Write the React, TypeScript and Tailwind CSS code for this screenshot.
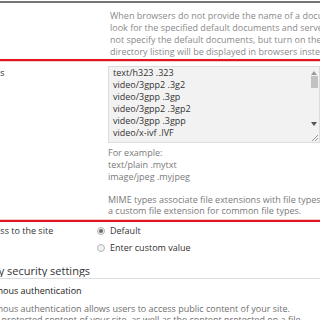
const MIME_ITEMS = [
  'text/h323 .323',
  'video/3gpp2 .3g2',
  'video/3gpp .3gp',
  'video/3gpp2 .3gp2',
  'video/3gpp .3gpp',
  'video/x-ivf .IVF',
];

function RedRule({ pinkAbove }: { pinkAbove?: boolean }) {
  return (
    <div className="flex flex-col">
      {pinkAbove && <div className="h-px bg-[#f6c9cc]" />}
      <div className="h-[2px] bg-[#e3131f]" />
      {!pinkAbove && <div className="h-px bg-[#f6c9cc]" />}
    </div>
  );
}

function Radio({ checked, label }: { checked?: boolean; label: string }) {
  return (
    <div className="flex items-center h-[17px]">
      <span className="w-[8px] h-[8px] rounded-full border border-[#b5b5b5] bg-[#f0f0f0] flex items-center justify-center mr-[5px]">
        {checked && <span className="w-[4px] h-[4px] rounded-full bg-[#6b6b6b]" />}
      </span>
      <span className="text-[#333]">{label}</span>
    </div>
  );
}

export default function App() {
  return (
    <div
      className="w-[320px] h-[320px] overflow-hidden bg-white text-[9px] leading-[12px] whitespace-nowrap"
      style={{ fontFamily: '"Open Sans", "Liberation Sans", sans-serif' }}
    >
      <div className="mt-px h-[2px] bg-[#757575]" />

      {/* Default document description */}
      <div className="flex pt-[7px] pb-[1px]">
        <div className="w-[110px] shrink-0" />
        <div className="text-[#8a8a8a] overflow-hidden">
          <p>When browsers do not provide the name of a document, IIS can</p>
          <p>look for the specified default documents and serve the first one</p>
          <p>not specify the default documents, but turn on the Directory browsing</p>
          <p>directory listing will be displayed in browsers instead of a page.</p>
        </div>
      </div>

      <RedRule />

      {/* MIME types */}
      <div className="flex pt-[4px] pb-[3px]">
        <div className="w-[108px] shrink-0 overflow-hidden">
          <div className="-ml-[44px] pt-[1px] text-[#333]">MIME types</div>
        </div>
        <div className="flex-1 min-w-0">
          <div className="relative h-[77px] border border-[#dcdcdc] bg-[#f2f2f2] flex">
            <div className="flex-1 pl-[4px] text-[#333]">
              {MIME_ITEMS.map((m) => (
                <div key={m}>{m}</div>
              ))}
            </div>
            <div className="w-[10px] flex flex-col items-center pt-[4px]">
              <svg width="6" height="4" viewBox="0 0 6 4">
                <path d="M0 4 L3 0 L6 4 Z" fill="#9a9a9a" />
              </svg>
              <div className="mt-[1px] w-[7px] h-[12px] bg-[#c2c2c2]" />
              <div className="flex-1" />
              <svg width="6" height="4" viewBox="0 0 6 4" className="mb-[16px]">
                <path d="M0 0 L6 0 L3 4 Z" fill="#555" />
              </svg>
            </div>
            <svg width="7" height="7" viewBox="0 0 7 7" className="absolute right-[1px] bottom-[1px]">
              <path d="M1 7 L7 1 M4 7 L7 4" stroke="#9a9a9a" strokeWidth="1" />
            </svg>
          </div>
          <div className="pt-[4px] text-[#7a7a7a]">
            <p>For example:</p>
            <p>text/plain .mytxt</p>
            <p>image/jpeg .myjpeg</p>
            <p className="mt-[11px] leading-[11px]">MIME types associate file extensions with file types. To add</p>
            <p className="leading-[11px]">a custom file extension for common file types.</p>
          </div>
        </div>
      </div>

      <RedRule pinkAbove />

      {/* Access to the site */}
      <div className="flex">
        <div className="w-[97px] shrink-0 overflow-hidden">
          <div className="-ml-[19px] leading-[17px] text-[#333]">Access to the site</div>
        </div>
        <div className="flex flex-col">
          <Radio checked label="Default" />
          <Radio label="Enter custom value" />
        </div>
      </div>

      {/* Directory security settings */}
      <div className="mt-[8px] overflow-hidden">
        <div className="-ml-[43px] text-[11px] leading-[13px] text-[#333]">
          Directory security settings
        </div>
      </div>
      <div className="mt-[1px] h-px bg-[#dedede]" />

      <div className="overflow-hidden pt-[6px]">
        <div className="-ml-[32px]">
          <div className="text-[#222] leading-[12px]">Anonymous authentication</div>
          <div className="mt-[6px] text-[#6f6f6f] leading-[11px]">
            <p>Anonymous authentication allows users to access public content of your site.</p>
            <p className="-ml-[10px]">password-protected content of your site, as well as the content protected on a file</p>
          </div>
        </div>
      </div>
    </div>
  );
}
